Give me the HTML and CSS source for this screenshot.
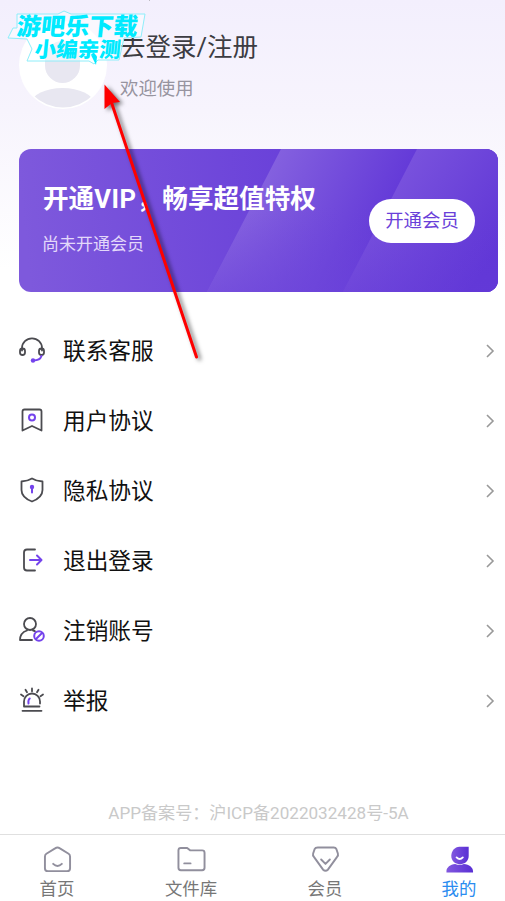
FILE: index.html
```
<!DOCTYPE html>
<html lang="zh-CN">
<head>
<meta charset="utf-8">
<title>我的</title>
<link rel="stylesheet" href="styles.css">
</head>
<body>
<div class="app">
  <header class="profile">
    <svg class="avatar" viewBox="0 0 88 88"><defs><clipPath id="round"><circle cx="44" cy="44" r="42.500"/></clipPath></defs><circle cx="44" cy="44" r="44" fill="#fff"/><g fill="#e8e7f1" clip-path="url(#round)"><rect x="26" y="20" width="35" height="42" rx="17.500"/><ellipse cx="43.500" cy="82" rx="31" ry="15"/></g></svg>
    <div class="who">
      <div class="login">去登录/注册</div>
      <div class="welcome">欢迎使用</div>
    </div>
  </header>

  <section class="vip">
    <svg class="vip-bg" viewBox="0 0 479 143" preserveAspectRatio="none">
      <defs>
        <linearGradient id="g0" gradientUnits="userSpaceOnUse" x1="0" y1="30" x2="290" y2="0"><stop offset="0" stop-color="#7e59dc"/><stop offset="1" stop-color="#683fd9"/></linearGradient>
        <linearGradient id="g1" gradientUnits="userSpaceOnUse" x1="245" y1="20" x2="365" y2="75"><stop offset="0" stop-color="#8562df"/><stop offset="1" stop-color="#643ad8"/></linearGradient>
        <linearGradient id="g1fade" x1="0" y1="0" x2="0" y2="1"><stop offset=".4" stop-color="#6d45da" stop-opacity="0"/><stop offset="1" stop-color="#6d45da" stop-opacity=".6"/></linearGradient>
        <linearGradient id="g2" gradientUnits="userSpaceOnUse" x1="375" y1="30" x2="479" y2="100"><stop offset="0" stop-color="#7952dd"/><stop offset="1" stop-color="#6036d6"/></linearGradient>
        <linearGradient id="g2fade" x1="0" y1="0" x2="0" y2="1"><stop offset=".4" stop-color="#663cd9" stop-opacity="0"/><stop offset="1" stop-color="#663cd9" stop-opacity=".4"/></linearGradient>
      </defs>
      <rect width="479" height="143" fill="url(#g0)"/>
      <path d="M262 0H479V143H188Z" fill="url(#g1)"/>
      <path d="M262 0H479V143H188Z" fill="url(#g1fade)"/>
      <path d="M398 0H479V143H324Z" fill="url(#g2)"/>
      <path d="M398 0H479V143H324Z" fill="url(#g2fade)"/>
    </svg>
    <div class="vip-text">
      <div class="vip-title">开通<span class="latin">VIP</span>，畅享超值特权</div>
      <div class="vip-sub">尚未开通会员</div>
    </div>
    <div class="vip-btn">开通会员</div>
  </section>

  <ul class="menu">
    <li><svg class="icon" viewBox="0 0 28 28"><path d="M4 14.500V12a10 9.700 0 0 1 20 0v2.500"/><rect x="2" y="12.500" width="5" height="6.500" rx="2.500"/><rect x="21" y="12.500" width="5" height="6.500" rx="2.500"/><path class="accent" d="M23.500 20c-1 3-4 4.500-8 4.500"/><circle class="solid" cx="15" cy="24.500" r="2.200"/></svg><span>联系客服</span><svg class="chev" viewBox="0 0 10 14"><path d="M2 1l6 6-6 6"/></svg></li>
    <li><svg class="icon" viewBox="0 0 28 28"><path d="M4.500 5.500q0-2 2-2h15q2 0 2 2v19l-9.500-4.500-9.500 4.500Z"/><circle class="accent" cx="14" cy="11.500" r="3"/></svg><span>用户协议</span><svg class="chev" viewBox="0 0 10 14"><path d="M2 1l6 6-6 6"/></svg></li>
    <li><svg class="icon" viewBox="0 0 28 28"><path d="M14 2.500Q18 5 24.500 5.500V14c0 6-4 9-10.500 11.500C7.500 23 3.500 20 3.500 14V5.500Q10 5 14 2.500Z"/><circle class="solid" cx="14" cy="11" r="2.200"/><path class="accent" d="M14 12v4.500"/></svg><span>隐私协议</span><svg class="chev" viewBox="0 0 10 14"><path d="M2 1l6 6-6 6"/></svg></li>
    <li><svg class="icon" viewBox="0 0 28 28"><path d="M17 3.500H9q-3 0-3 3v15q0 3 3 3h8"/><path class="accent" d="M12 14h11M19 9.500l4.500 4.500-4.500 4.500"/></svg><span>退出登录</span><svg class="chev" viewBox="0 0 10 14"><path d="M2 1l6 6-6 6"/></svg></li>
    <li><svg class="icon" viewBox="0 0 28 28"><circle cx="12" cy="8" r="6"/><path d="M9 14.500C4.500 16 2 19.500 2 24h12M15 14.500q1 .2 2 .8"/><g class="accent"><circle cx="21" cy="20" r="4.800"/><path d="M18 23l6-6"/></g></svg><span>注销账号</span><svg class="chev" viewBox="0 0 10 14"><path d="M2 1l6 6-6 6"/></svg></li>
    <li><svg class="icon" viewBox="0 0 28 28"><path d="M21.500 20.500H6V15.500a8 8 0 0 1 16 0v2M4.500 24.800h19M14 2.500v2.800M7.500 3.700l1.500 2.600M20.500 3.700L19 6.300M3 8.500l2.500 1.700M25 8.500l-2.500 1.700"/><path class="accent" d="M10.500 17.500c-.4-2.500 0-4 1.200-5"/></svg><span>举报</span><svg class="chev" viewBox="0 0 10 14"><path d="M2 1l6 6-6 6"/></svg></li>
  </ul>

  <div class="record">APP备案号：沪ICP备2022032428号-5A</div>

  <nav class="tabs">
    <div class="tab"><svg viewBox="0 0 30 28"><path d="M2 11q0-2 1.500-3l9-5.500q2.500-1.700 5 0l9 5.500q1.500 1 1.500 3v12q0 3-3 3H5q-3 0-3-3ZM10.500 18.500q4.500 4.500 9 0"/></svg><span>首页</span></div>
    <div class="tab"><svg viewBox="0 0 30 28"><path d="M1.500 4.500q0-2.500 2.500-2.500h6.500l3 2.500h12.500q2.500 0 2.500 2.500v15.500q0 2.500-2.500 2.500h-22Q1.500 25 1.500 22.500ZM7.500 18h6.500"/></svg><span>文件库</span></div>
    <div class="tab"><svg viewBox="0 0 30 28"><path d="M7 1.500h16.500q2 0 2.800 1.800l1.500 4.500q.7 2-1 3.700L17.500 24.500q-2.500 2-5 0L3.200 11.500q-1.700-1.700-1-3.700l1.500-4.500Q4.500 1.500 7 1.500ZM10.500 14l4.500 4.500 4.500-4.500"/></svg><span>会员</span></div>
    <div class="tab active"><svg viewBox="0 0 30 28"><defs><linearGradient id="me"><stop stop-color="#8258df"/><stop offset="1" stop-color="#592fd4"/></linearGradient></defs><path class="fill" d="M15 .8h9.500v9.500c0 5-4 8.500-9 8.500s-9-3.500-9-8.500S10 .8 15 .8Z"/><path class="fill" d="M1.500 27.500v-1.500c0-4 4-7 9-7.500q4.500 2 9 0c5.500.5 9.500 3.500 9.500 7.500v1.500Z"/><path class="smile" d="M12 11.800q3.200 3.200 6.400 0"/></svg><span>我的</span></div>
  </nav>

  <svg class="overlay" viewBox="0 0 505 901">
    <path class="mark-outline" d="M17 14h41l6-3 7 3h74l-4 23-17 1-5 22H98l-4 4-5-3H27l5-12-5-10-19-1 5-10h4Z"/>
    <g class="mark">
      <text transform="translate(16 34.500) skewX(-6)" font-size="24" textLength="121" lengthAdjust="spacingAndGlyphs">游吧乐下载</text>
      <text transform="translate(34 56.500) skewX(-6)" font-size="21" textLength="86" lengthAdjust="spacingAndGlyphs">小编亲测</text>
    </g>
    <path d="M91 55l6 2-1 8Z" fill="#00eaff"/>
    <g class="arrow"><path d="M112 104L196.500 357" stroke="#fe0000" stroke-width="3" stroke-linecap="round"/><path d="M104.500 84.500L120 102l-8 1-7.500 6Z" fill="#fe0000"/></g>
    <path d="M149 0h1" stroke="#888"/>
  </svg>
</div>
</body>
</html>
```

FILE: styles.css
```
* { box-sizing: border-box; }
body { margin: 0; font-family: Roboto, "Noto Sans CJK SC", sans-serif; }
.app {
  position: relative;
  width: 505px;
  height: 901px;
  overflow: hidden;
  display: flex;
  flex-direction: column;
  background: linear-gradient(#f3effd 0, #f7f4fd 110px, #fff 270px);
}
.profile { display: flex; height: 149px; padding: 21px 19px 0; gap: 13px; }
.avatar { width: 88px; height: 88px; }
.login { margin-top: 8px; font-size: 25.5px; line-height: 36px; color: #3c3c42; }
.welcome { margin-top: 11px; font-size: 18.4px; line-height: 26px; color: #97949f; }

.vip {
  position: relative;
  display: flex;
  justify-content: space-between;
  align-items: center;
  width: 479px;
  height: 143px;
  margin-left: 19px;
  padding: 0 23px 0 24px;
  border-radius: 12px;
  overflow: hidden;
  color: #fff;
}
.vip-bg { position: absolute; inset: 0; width: 100%; height: 100%; }
.vip-text, .vip-btn { position: relative; }
.vip-text { align-self: flex-start; padding-top: 31px; white-space: nowrap; }
.vip-title { font-size: 25.6px; line-height: 38px; font-weight: 700; }
.latin { letter-spacing: .6px; }
.vip-sub { margin: 14px 0 0 -1px; font-size: 17px; line-height: 25px; color: #e3d8fa; }
.vip-btn {
  width: 106px;
  height: 44px;
  border-radius: 22px;
  background: #fff;
  color: #6a3fd9;
  font-size: 18.4px;
  line-height: 43px;
  text-align: center;
}

.menu { list-style: none; margin: 23px 0 0; padding: 0 10px 0 18px; }
.menu li { display: flex; align-items: center; height: 70px; font-size: 22.7px; line-height: 34px; color: #111; }
.menu span { margin-left: 17px; padding-top: 3px; flex: 1; }
.icon { width: 28px; height: 28px; fill: none; stroke: #4b4b50; stroke-width: 1.8; stroke-linecap: round; stroke-linejoin: round; }
.icon .accent { stroke: #7443ec; stroke-width: 2; }
.icon .solid { fill: #7443ec; stroke: none; }
.chev { width: 10px; height: 14px; margin-top: 2px; fill: none; stroke: #999; stroke-width: 1.6; }

.record { margin: auto 0 8px; padding-left: 12px; font-size: 17.1px; line-height: 25px; color: #c9c9c9; text-align: center; white-space: nowrap; }
.tabs { display: flex; height: 67px; margin: 0 -21px 0 -10px; border-top: 1px solid #e0e0e0; }
.tab { flex: 1; display: flex; flex-direction: column; align-items: center; padding-top: 11px; font-size: 17.4px; line-height: 25px; color: #777; }
.tab svg { width: 29px; height: 28px; margin-bottom: 4px; overflow: visible; fill: none; stroke: #918f9d; stroke-width: 2; stroke-linecap: round; stroke-linejoin: round; }
.tab.active { color: #2a8cf0; }
.tab .fill { fill: url(#me); stroke: none; }
.tab .smile { stroke: #fff; }

.overlay { position: absolute; inset: 0; width: 505px; height: 901px; pointer-events: none; }
.mark { font-family: "Noto Sans CJK SC", sans-serif; font-weight: 900; fill: #00eaff; }
.mark-outline { fill: rgba(255, 255, 255, .45); stroke: #8eeefa; stroke-width: 1; }
.arrow { filter: drop-shadow(3px 2px 2px rgba(0, 0, 0, .55)); }
```
